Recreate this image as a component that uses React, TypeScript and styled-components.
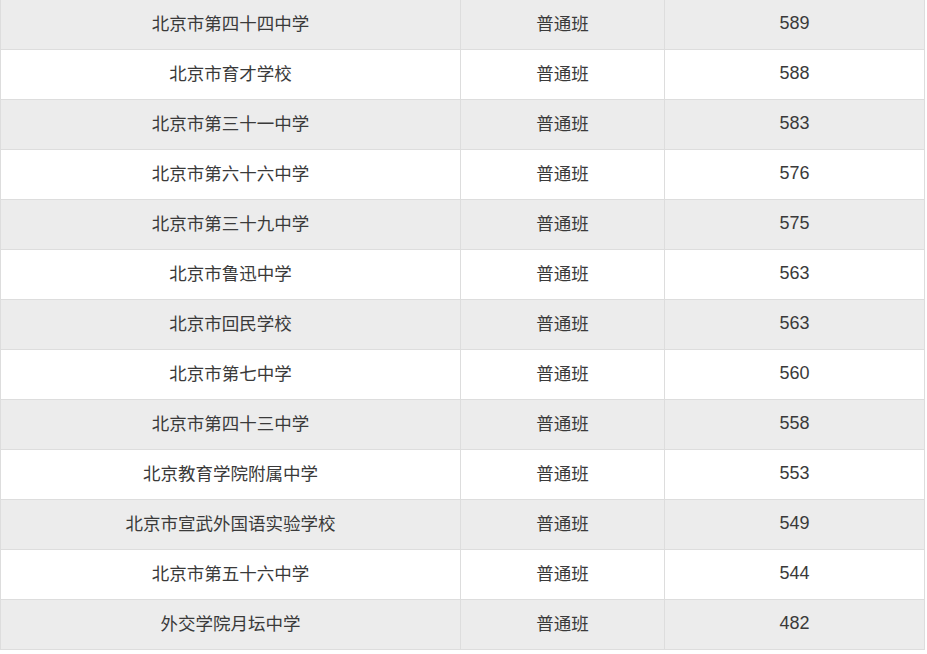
import React from "react";
import styled, { createGlobalStyle } from "styled-components";

const GlobalStyle = createGlobalStyle`
  html, body {
    margin: 0;
    padding: 0;
    background: #ffffff;
  }
`;

const ScoreTable = styled.table`
  width: 925px;
  table-layout: fixed;
  border-collapse: separate;
  border-spacing: 0;
  color: #3a3a3a;
`;

const Row = styled.tr<{ $striped: boolean }>`
  background-color: ${(p) => (p.$striped ? "#ececec" : "#ffffff")};
`;

const Cell = styled.td<{ $cjk?: boolean }>`
  box-sizing: border-box;
  height: 50px;
  padding: 0 0 ${(p) => (p.$cjk ? "5px" : "2px")};
  text-align: center;
  vertical-align: middle;
  line-height: 1.2;
  font-family: ${(p) =>
    p.$cjk
      ? `"Noto Sans CJK SC", sans-serif`
      : `"Liberation Sans", Arial, sans-serif`};
  font-size: ${(p) => (p.$cjk ? "17.5px" : "18px")};
  border-right: 1px solid #dddddd;
  border-bottom: 1px solid #dddddd;

  &:nth-child(1) {
    width: 461px;
    border-left: 1px solid #dddddd;
  }
  &:nth-child(2) {
    width: 204px;
  }
  &:nth-child(3) {
    width: 260px;
  }
`;

const rows: [string, string, number][] = [
  ["北京市第四十四中学", "普通班", 589],
  ["北京市育才学校", "普通班", 588],
  ["北京市第三十一中学", "普通班", 583],
  ["北京市第六十六中学", "普通班", 576],
  ["北京市第三十九中学", "普通班", 575],
  ["北京市鲁迅中学", "普通班", 563],
  ["北京市回民学校", "普通班", 563],
  ["北京市第七中学", "普通班", 560],
  ["北京市第四十三中学", "普通班", 558],
  ["北京教育学院附属中学", "普通班", 553],
  ["北京市宣武外国语实验学校", "普通班", 549],
  ["北京市第五十六中学", "普通班", 544],
  ["外交学院月坛中学", "普通班", 482],
];

const App = () => {
  return (
    <>
      <GlobalStyle />
      <ScoreTable>
        <tbody>
          {rows.map(([school, cls, score], i) => (
            <Row key={i} $striped={i % 2 === 0}>
              <Cell $cjk>{school}</Cell>
              <Cell $cjk>{cls}</Cell>
              <Cell>{score}</Cell>
            </Row>
          ))}
        </tbody>
      </ScoreTable>
    </>
  );
};

export default App;
